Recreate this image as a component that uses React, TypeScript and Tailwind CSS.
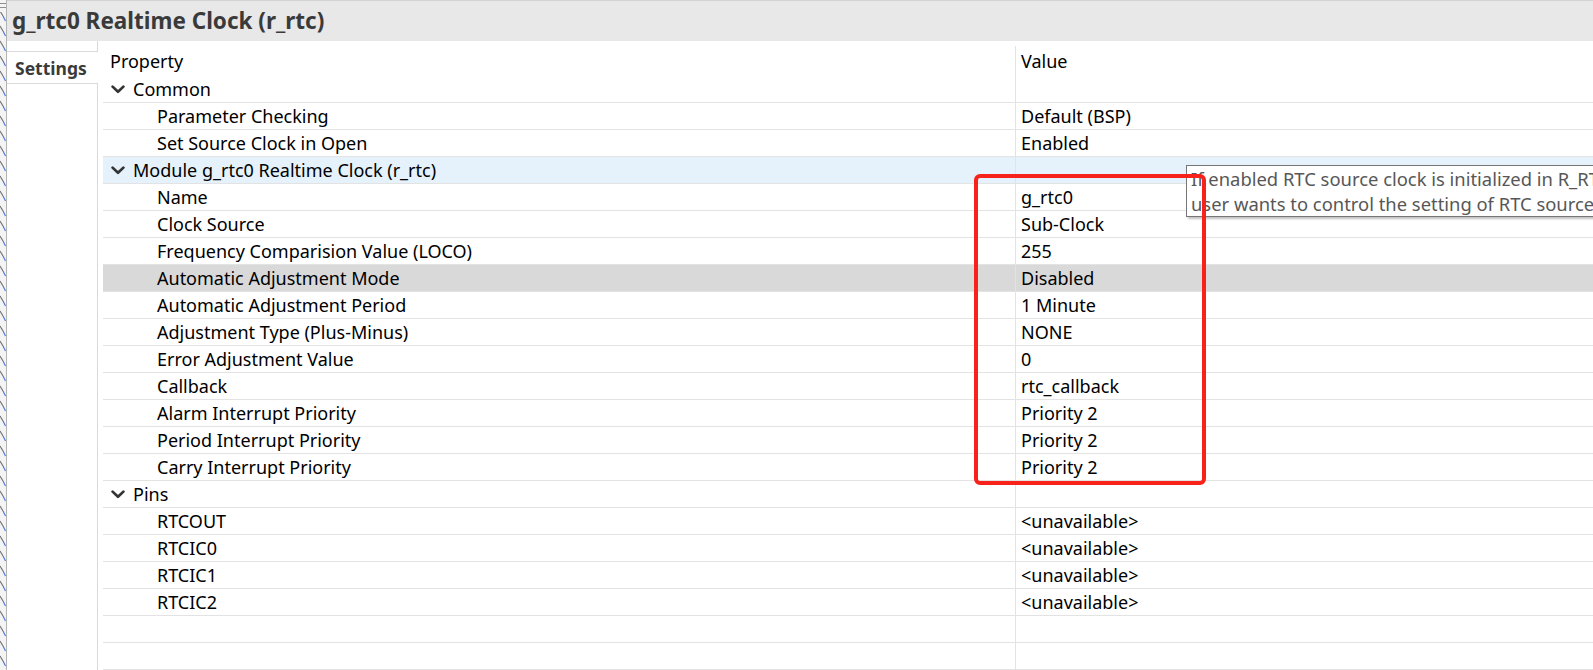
import React from "react";

type Row =
  | { kind: "cat"; label: string; bg?: string }
  | { kind: "item"; label: string; value: string; bg?: string }
  | { kind: "empty" };

const rows: Row[] = [
  { kind: "cat", label: "Common" },
  { kind: "item", label: "Parameter Checking", value: "Default (BSP)" },
  { kind: "item", label: "Set Source Clock in Open", value: "Enabled" },
  { kind: "cat", label: "Module g_rtc0 Realtime Clock (r_rtc)", bg: "blue" },
  { kind: "item", label: "Name", value: "g_rtc0" },
  { kind: "item", label: "Clock Source", value: "Sub-Clock" },
  { kind: "item", label: "Frequency Comparision Value (LOCO)", value: "255" },
  { kind: "item", label: "Automatic Adjustment Mode", value: "Disabled", bg: "gray" },
  { kind: "item", label: "Automatic Adjustment Period", value: "1 Minute" },
  { kind: "item", label: "Adjustment Type (Plus-Minus)", value: "NONE" },
  { kind: "item", label: "Error Adjustment Value", value: "0" },
  { kind: "item", label: "Callback", value: "rtc_callback" },
  { kind: "item", label: "Alarm Interrupt Priority", value: "Priority 2" },
  { kind: "item", label: "Period Interrupt Priority", value: "Priority 2" },
  { kind: "item", label: "Carry Interrupt Priority", value: "Priority 2" },
  { kind: "cat", label: "Pins" },
  { kind: "item", label: "RTCOUT", value: "<unavailable>" },
  { kind: "item", label: "RTCIC0", value: "<unavailable>" },
  { kind: "item", label: "RTCIC1", value: "<unavailable>" },
  { kind: "item", label: "RTCIC2", value: "<unavailable>" },
  { kind: "empty" },
  { kind: "empty" },
  { kind: "empty" },
];

function Chevron() {
  return (
    <svg width="14" height="9" viewBox="0 0 14 9" className="shrink-0">
      <polyline points="1.6,1.6 7,6.8 12.4,1.6" fill="none" stroke="#333333" strokeWidth="2.7" strokeLinecap="round" strokeLinejoin="round" />
    </svg>
  );
}

function Strip() {
  const marks = [];
  for (let y = -4; y < 670; y += 15) {
    marks.push(
      <g key={y}>
        <line x1="0" y1={y} x2="3" y2={y + 5} stroke="#6e6e6e" strokeWidth="1.1" />
        <line x1="3" y1={y + 5} x2="5.5" y2={y + 10} stroke="#4a74d6" strokeWidth="1.1" />
      </g>
    );
  }
  return (
    <svg width="6" height="670" className="block">
      <rect x="0" y="0" width="6" height="670" fill="#f4f4f4" />
      {marks}
      <rect x="0" y="0" width="6" height="12" fill="#f4f4f4" />
      <line x1="0" y1="3.5" x2="6" y2="3.5" stroke="#8f8f8f" strokeWidth="1" />
      <line x1="0" y1="7.5" x2="6" y2="7.5" stroke="#8f8f8f" strokeWidth="1" />
    </svg>
  );
}

export default function App() {
  const font = { fontFamily: '"Noto Sans", "Open Sans", sans-serif' };
  return (
    <div className="relative w-[1593px] h-[670px] overflow-hidden bg-white text-black" style={font}>
      <div className="flex h-full">
        <div className="w-[6px] shrink-0 h-full">
          <Strip />
        </div>
        <div className="w-px shrink-0 h-full bg-[#b4b4b4]" />
        <div className="flex-1 flex flex-col min-w-0">
          <div className="h-[41px] shrink-0 bg-[#e8e8e8] border-t border-[#d2d2d2] flex items-center pl-[5px]">
            <span className="text-[22.5px] font-bold text-[#3a3a3a] leading-[40px]">g_rtc0 Realtime Clock (r_rtc)</span>
          </div>
          <div className="flex flex-1 min-h-0">
            <div className="w-[91px] shrink-0 flex flex-col">
              <div className="h-[10px] border-r border-[#d9d9d9]" />
              <div className="h-[33px] border-t border-b border-[#d9d9d9] flex items-center pl-[8px]">
                <span className="text-[17.5px] font-bold text-[#3a3a3a] leading-[28px] pt-[1px]">Settings</span>
              </div>
              <div className="flex-1 border-r border-[#d9d9d9]" />
            </div>
            <div className="w-[5px] shrink-0" />
            <div className="flex-1 flex flex-col min-w-0">
              <div className="h-[35px] shrink-0 flex">
                <div className="w-[912px] shrink-0 pl-[7px] pt-[6px] text-[18px] leading-[28px]">Property</div>
                <div className="flex-1 mt-[5px] border-l border-[#e3e3e3] pl-[5px] pt-[1px] text-[18px] leading-[28px]">Value</div>
              </div>
              {rows.map((r, i) => {
                const bg =
                  "bg" in r && r.bg === "blue"
                    ? "bg-[#e5f1fb]"
                    : "bg" in r && r.bg === "gray"
                    ? "bg-[#d9d9d9]"
                    : "bg-white";
                return (
                  <div key={i} className={`h-[27px] shrink-0 flex border-b border-[#e3e3e3] ${bg}`}>
                    <div className="w-[912px] shrink-0 flex items-center text-[18px] leading-[28px] whitespace-nowrap">
                      {r.kind === "cat" && (
                        <>
                          <div className="w-[8px] shrink-0" />
                          <Chevron />
                          <span className="pl-[8px]">{r.label}</span>
                        </>
                      )}
                      {r.kind === "item" && <span className="pl-[54px]">{r.label}</span>}
                    </div>
                    <div className="flex-1 border-l border-[#e3e3e3] pl-[5px] flex items-center text-[18px] leading-[28px] whitespace-nowrap">
                      {r.kind === "item" ? r.value : ""}
                    </div>
                  </div>
                );
              })}
            </div>
          </div>
        </div>
      </div>

      <div className="absolute left-[1186px] top-[165px] w-[440px] h-[52px] bg-white border border-[#767676] shadow-[2px_2px_2px_rgba(0,0,0,0.25)] pl-[4px] text-[18.4px] leading-[25px] text-[#575757] whitespace-nowrap overflow-hidden">
        <div>If enabled RTC source clock is initialized in R_RTC_Open(). Disable if</div>
        <div>user wants to control the setting of RTC source clock.</div>
      </div>

      <div className="absolute left-[974px] top-[174px] w-[232px] h-[311px] border-[4px] border-[#f7231b] rounded-[6px]" />
    </div>
  );
}
